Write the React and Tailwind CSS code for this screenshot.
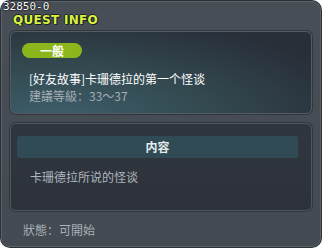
import React from 'react';

const cjk = { fontFamily: '"Noto Sans CJK SC", "Noto Sans CJK TC", sans-serif' };

const App = () => {
    return (
        <div className="w-[322px] h-[248px] bg-[#2b3035] rounded-[10px] p-px" style={cjk}>
            <div className="relative w-full h-full rounded-[9px] border border-[#5b626a] bg-[linear-gradient(to_bottom,#474e55,#434a51)] flex flex-col px-[8px]">
                {/* id + title */}
                <div className="absolute left-[1px] -top-[1px] text-[11px] leading-[11px] text-white [text-shadow:0_0_2px_#000,0_0_1px_#000]" style={{ fontFamily: '"DejaVu Sans Mono", monospace' }}>
                    32850-0
                </div>
                <div className="h-[29px] pl-[3px] pt-[12px]">
                    <span className="block text-[12px] font-bold leading-[12px] text-[#d8f23e] tracking-[0.3px] [text-shadow:1px_1px_0_#1d2226,-1px_0_0_#1d2226,0_-1px_0_#1d2226,1px_0_0_#1d2226]" style={{ fontFamily: '"DejaVu Sans", sans-serif' }}>
                        QUEST INFO
                    </span>
                </div>

                {/* quest panel */}
                <div className="h-[83px] rounded-[6px] border border-[#545b63] shadow-[0_0_0_1px_#31363c] bg-[radial-gradient(ellipse_at_15%_110%,#3d606c_0%,#33484f_45%,#282f39_85%)] pl-[11px] pt-[11px]">
                    <div className="w-[60px] h-[15px] rounded-full bg-[#8bb61c] flex items-center justify-center text-white text-[12px] font-bold leading-none">
                        一般
                    </div>
                    <div className="mt-[13px] pl-[7px] text-[12px] leading-[15px] text-white">[好友故事]卡珊德拉的第一个怪谈</div>
                    <div className="mt-[2px] pl-[7px] text-[12px] leading-[15px] text-[#a4adb5]">建議等級：33～37</div>
                </div>

                {/* content panel */}
                <div className="mt-[9px] h-[88px] rounded-[6px] border border-[#4f565d] shadow-[0_0_0_1px_#31363c] bg-[linear-gradient(to_bottom,#30363f,#2d323a)] pl-[6px] pr-[13px] pt-[12px]">
                    <div className="h-[22px] rounded-[3px] bg-[#314b56] flex items-center justify-center text-[12px] font-bold text-[#e4ecee]">
                        内容
                    </div>
                    <div className="mt-[11px] pl-[13px] text-[12px] leading-[16px] text-[#aeb6be]">卡珊德拉所说的怪谈</div>
                </div>

                <div className="mt-[11px] pl-[13px] text-[12px] leading-[16px] text-[#a8b0b8]">狀態：可開始</div>
            </div>
        </div>
    );
};

export default App;
